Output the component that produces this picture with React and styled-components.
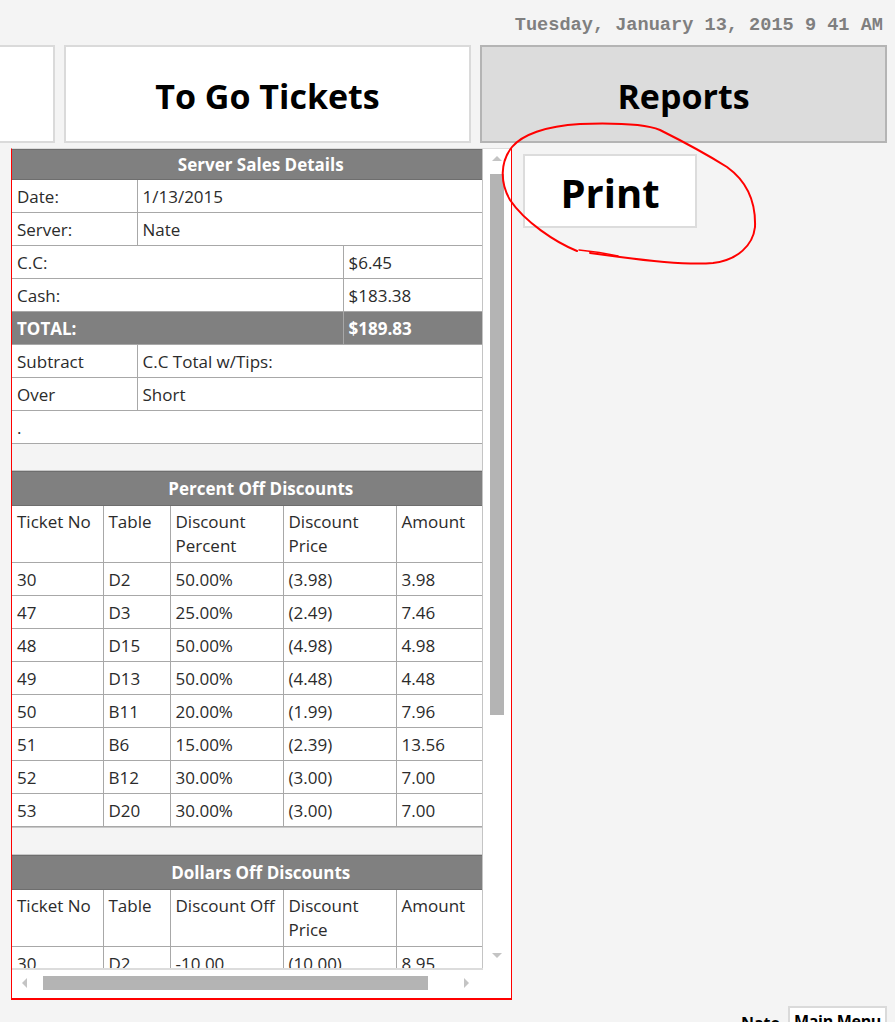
import React from 'react';
import styled, { createGlobalStyle } from 'styled-components';

// ######################### Styling  ################################

const GlobalStyle = createGlobalStyle`
  html, body {
    margin: 0;
    padding: 0;
    background: #f4f4f4;
    overflow: hidden;
  }
  * { box-sizing: border-box; }
`;

const Page = styled.div`
  position: relative;
  width: 895px;
  height: 1022px;
  overflow: hidden;
  font-family: "Open Sans", "Noto Sans", sans-serif;
  color: #2b2b2b;
`;

const DateBar = styled.div`
  height: 45px;
  padding: 15px 12px 0 0;
  text-align: right;
  font-family: "Liberation Mono", "DejaVu Sans Mono", monospace;
  font-weight: bold;
  font-size: 18.6px;
  line-height: 22px;
  color: #7f7f7f;
`;

const NavRow = styled.div`
  display: flex;
  gap: 9px;
  height: 98px;
  margin-left: -352px;
`;

const NavButton = styled.div`
  flex: 0 0 407px;
  display: flex;
  align-items: center;
  justify-content: center;
  background: ${p => (p.$active ? '#dcdcdc' : '#ffffff')};
  border: 2px solid ${p => (p.$active ? '#b4b4b4' : '#dadada')};
  font-weight: 700;
  font-size: 34px;
  color: #000;
  padding-top: 3px;
`;

const Main = styled.div`
  display: flex;
  align-items: flex-start;
  padding: 5px 0 0 11px;
`;

const Panel = styled.div`
  width: 501px;
  height: 852px;
  background: #fff;
  border: 1px solid #f00;
  border-top: 1px solid #dcdcdc;
  border-bottom-width: 2px;
  display: grid;
  grid-template-columns: 471px 1fr;
  grid-template-rows: 819px 1fr;
`;

const Viewport = styled.div`
  overflow: hidden;
  border-right: 1px solid #c4c4c4;
`;

const VScroll = styled.div`
  display: flex;
  flex-direction: column;
  align-items: center;
  padding-top: 7px;
`;

const HScroll = styled.div`
  display: flex;
  align-items: center;
  padding: 0 0 2px 10px;
  border-top: 2px solid #dcdcdc;
`;

const Arrow = styled.div`
  width: 0;
  height: 0;
  border: 5px solid transparent;
  ${p => p.$dir === 'up' && 'border-bottom-color: #c4c4c4; border-top-width: 0;'}
  ${p => p.$dir === 'down' && 'border-top-color: #c4c4c4; border-bottom-width: 0;'}
  ${p => p.$dir === 'left' && 'border-right-color: #c4c4c4; border-left-width: 0;'}
  ${p => p.$dir === 'right' && 'border-left-color: #c4c4c4; border-right-width: 0;'}
`;

const VThumb = styled.div`
  width: 14px;
  height: 541px;
  margin-top: 13px;
  background: #b4b4b4;
`;

const VDown = styled.div`
  margin-top: auto;
  margin-bottom: 10px;
`;

const HThumb = styled.div`
  width: 385px;
  height: 14px;
  margin-left: 16px;
  background: #b4b4b4;
`;

const HRight = styled.div`
  margin-left: 36px;
`;

const Table = styled.table`
  width: 498px;
  border-collapse: collapse;
  table-layout: fixed;
  font-size: 17px;
`;

const SectionHead = styled.th`
  height: ${p => p.$h || 33}px;
  background: #808080;
  color: #fff;
  font-weight: 700;
  font-size: 17px;
  text-align: center;
  border: 1px solid #6e6e6e;
  border-left: none;
  padding: 0;
`;

const Cell = styled.td`
  height: 33px;
  padding: 0 5px;
  border: 1px solid #a8a8a8;
  border-left: ${p => (p.$first ? 'none' : '1px solid #a8a8a8')};
  background: ${p => (p.$total ? '#808080' : '#fff')};
  color: ${p => (p.$total ? '#fff' : '#2b2b2b')};
  font-weight: ${p => (p.$total ? 700 : 400)};
  white-space: nowrap;
  overflow: hidden;
`;

const ColHead = styled.td`
  height: 57px;
  padding: 4px 5px 0;
  vertical-align: top;
  line-height: 24px;
  border: 1px solid #a8a8a8;
  border-left: ${p => (p.$first ? 'none' : '1px solid #a8a8a8')};
  background: #fff;
`;

const Spacer = styled.td`
  height: 27px;
  padding: 0;
  background: #f4f4f4;
  border: 1px solid #c8c8c8;
  border-left: none;
`;

const SideColumn = styled.div`
  padding: 6px 0 0 11px;
`;

const PrintButton = styled.div`
  width: 174px;
  height: 74px;
  display: flex;
  align-items: center;
  justify-content: center;
  background: #fff;
  border: 2px solid #dcdcdc;
  font-weight: 700;
  font-size: 40px;
  color: #000;
  padding-top: 3px;
`;

const Footer = styled.div`
  display: flex;
  justify-content: flex-end;
  align-items: flex-start;
  gap: 8px;
  padding: 6px 8px 0 0;
`;

const UserName = styled.span`
  font-weight: 700;
  font-size: 16px;
  color: #000;
  padding-top: 6px;
`;

const MenuButton = styled.div`
  width: 99px;
  height: 40px;
  padding-top: 2px;
  text-align: center;
  white-space: nowrap;
  background: #fff;
  border: 2px solid #dadada;
  font-weight: 700;
  font-size: 16px;
  letter-spacing: -0.3px;
  color: #000;
`;

const Annotation = styled.svg`
  position: absolute;
  left: 0;
  top: 0;
  pointer-events: none;
`;

//############################# Data ################################

const percentRows = [
    ['30', 'D2', '50.00%', '(3.98)', '3.98'],
    ['47', 'D3', '25.00%', '(2.49)', '7.46'],
    ['48', 'D15', '50.00%', '(4.98)', '4.98'],
    ['49', 'D13', '50.00%', '(4.48)', '4.48'],
    ['50', 'B11', '20.00%', '(1.99)', '7.96'],
    ['51', 'B6', '15.00%', '(2.39)', '13.56'],
    ['52', 'B12', '30.00%', '(3.00)', '7.00'],
    ['53', 'D20', '30.00%', '(3.00)', '7.00'],
];

const dollarRows = [
    ['30', 'D2', '-10.00', '(10.00)', '8.95'],
    ['41', 'B4', '-5.00', '(5.00)', '12.40'],
];

const discountCols = [91, 67, 113, 113, 114];

//############################# Component ################################

const DiscountTable = ({ title, thirdHead, rows }) => (
    <Table>
        <colgroup>
            {discountCols.map((w, i) => <col key={i} style={{ width: w }} />)}
        </colgroup>
        <tbody>
            <tr><SectionHead colSpan={5} $h={34}>{title}</SectionHead></tr>
            <tr>
                <ColHead $first>Ticket No</ColHead>
                <ColHead>Table</ColHead>
                <ColHead>{thirdHead}</ColHead>
                <ColHead>Discount<br />Price</ColHead>
                <ColHead>Amount</ColHead>
            </tr>
            {rows.map(r => (
                <tr key={r[0] + r[1]}>
                    {r.map((v, i) => <Cell key={i} $first={i === 0}>{v}</Cell>)}
                </tr>
            ))}
        </tbody>
    </Table>
);

const SummaryTable = () => (
    <Table>
        <colgroup>
            <col style={{ width: 125 }} />
            <col style={{ width: 206 }} />
            <col style={{ width: 167 }} />
        </colgroup>
        <tbody>
            <tr><SectionHead colSpan={3} $h={30}>Server Sales Details</SectionHead></tr>
            <tr><Cell $first>Date:</Cell><Cell colSpan={2}>1/13/2015</Cell></tr>
            <tr><Cell $first>Server:</Cell><Cell colSpan={2}>Nate</Cell></tr>
            <tr><Cell $first colSpan={2}>C.C:</Cell><Cell>$6.45</Cell></tr>
            <tr><Cell $first colSpan={2}>Cash:</Cell><Cell>$183.38</Cell></tr>
            <tr><Cell $first $total colSpan={2}>TOTAL:</Cell><Cell $total>$189.83</Cell></tr>
            <tr><Cell $first>Subtract</Cell><Cell colSpan={2}>C.C Total w/Tips:</Cell></tr>
            <tr><Cell $first>Over</Cell><Cell colSpan={2}>Short</Cell></tr>
            <tr><Cell $first colSpan={3}>.</Cell></tr>
            <tr><Spacer colSpan={3} /></tr>
        </tbody>
    </Table>
);

const App = () => {
    return <Page>
        <GlobalStyle />
        <DateBar>Tuesday, January 13, 2015 9 41 AM</DateBar>
        <NavRow>
            <NavButton>Server Tickets</NavButton>
            <NavButton>To Go Tickets</NavButton>
            <NavButton $active>Reports</NavButton>
        </NavRow>
        <Main>
            <Panel>
                <Viewport>
                    <SummaryTable />
                    <DiscountTable title='Percent Off Discounts' thirdHead={<>Discount<br />Percent</>} rows={percentRows} />
                    <Table>
                        <tbody><tr><Spacer /></tr></tbody>
                    </Table>
                    <DiscountTable title='Dollars Off Discounts' thirdHead='Discount Off' rows={dollarRows} />
                </Viewport>
                <VScroll>
                    <Arrow $dir='up' />
                    <VThumb />
                    <VDown><Arrow $dir='down' /></VDown>
                </VScroll>
                <HScroll>
                    <Arrow $dir='left' />
                    <HThumb />
                    <HRight><Arrow $dir='right' /></HRight>
                </HScroll>
                <div />
            </Panel>
            <SideColumn>
                <PrintButton>Print</PrintButton>
            </SideColumn>
        </Main>
        <Footer>
            <UserName>Nate</UserName>
            <MenuButton>Main Menu</MenuButton>
        </Footer>
        <Annotation width='895' height='1022' viewBox='0 0 895 1022'>
            <path
                d='M 577 251 C 555 242, 525 222, 510 200 C 500 183, 500 162, 512 147 C 522 135, 545 126, 580 124 C 610 123, 645 124, 660 130 C 680 140, 700 150, 727 167 C 745 180, 756 200, 755 227 C 753 245, 738 260, 713 263 C 690 265, 650 261, 620 257 L 590 253'
                fill='none' stroke='#ff0000' strokeWidth='2' strokeLinecap='round' />
            <path d='M 579 250 Q 600 252 618 256' fill='none' stroke='#ff0000' strokeWidth='1.5' strokeLinecap='round' />
        </Annotation>
    </Page>
};

export default App;
